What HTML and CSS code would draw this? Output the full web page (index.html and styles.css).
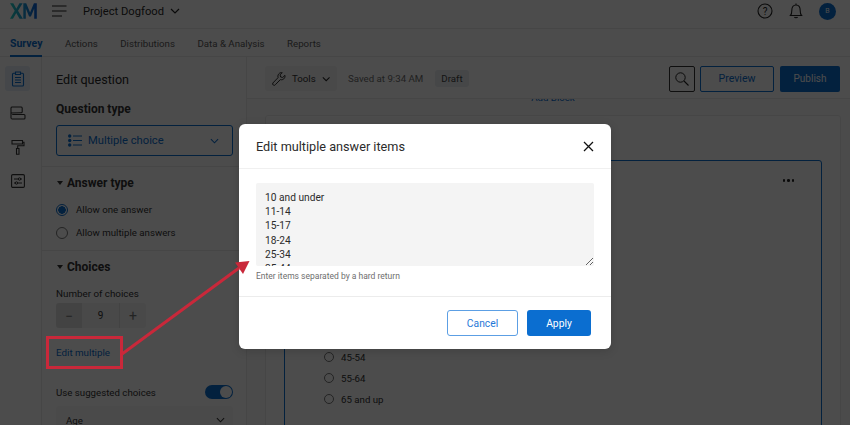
FILE: index.html
```html
<!DOCTYPE html>
<html lang="en">
<head>
<meta charset="utf-8">
<title>Edit multiple answer items</title>
<link rel="stylesheet" href="styles.css">
</head>
<body>
<div class="app">
  <header class="topbar">
    <svg class="logo" width="27" height="18" viewBox="0 0 28 18">
      <defs><linearGradient id="xm" x1="0" y1="0" x2="1" y2="0"><stop offset="0" stop-color="#21d0c3"/><stop offset=".5" stop-color="#1c9ad6"/><stop offset="1" stop-color="#0b5fd8"/></linearGradient></defs>
      <path fill="url(#xm)" d="M0 1h3.4L6.6 6.6 9.800 1h3.300L8.300 8.800 13.400 17h-3.500L6.500 11.200 3.100 17H0l4.900-8.200zM13.800 1h3l4 9.500 4-9.500h3v16h-2.700V6.500l-3.400 8.300h-1.900l-3.400-8.300V17h-2.600z"/>
    </svg>
    <svg class="hamburger" width="15" height="12" viewBox="0 0 15 12"><path d="M0 1h14.500M0 6h14.500M0 11h10" stroke="#222" stroke-width="1.200" fill="none"/></svg>
    <span class="project">Project Dogfood</span>
    <svg class="chev" width="10" height="6" viewBox="0 0 10 6"><path d="M1 1l4 4 4-4" stroke="#222" stroke-width="1.200" fill="none"/></svg>
    <div class="top-icons">
      <svg width="16" height="16" viewBox="0 0 16 16"><circle cx="8" cy="8" r="7" fill="none" stroke="#222" stroke-width="1.100"/><text x="8" y="11.500" text-anchor="middle" class="qmark">?</text></svg>
      <svg width="14" height="16" viewBox="0 0 14 16"><path d="M1.500 12.500c1-1 1.300-2 1.300-5C2.800 4 4.500 2 7 2s4.200 2 4.200 5.500c0 3 .3 4 1.300 5zM5.500 14c.3 1 2.700 1 3 0M7 .6V2" fill="none" stroke="#222" stroke-width="1.100"/></svg>
      <span class="avatar">B</span>
    </div>
  </header>
  <nav class="tabs">
    <a class="tab active">Survey</a>
    <a class="tab">Actions</a>
    <a class="tab">Distributions</a>
    <a class="tab">Data &amp; Analysis</a>
    <a class="tab">Reports</a>
  </nav>
  <div class="workspace">
    <aside class="rail">
      <span class="rail-item active">
        <svg width="14" height="16" viewBox="0 0 14 16"><path d="M4.500 2.300H2.500a1 1 0 0 0-1 1V14a1 1 0 0 0 1 1h9a1 1 0 0 0 1-1V3.300a1 1 0 0 0-1-1h-2M4.500 1h5v2.500h-5zM4 6.500h6M4 9h6M4 11.500h6" fill="none" stroke="#0b6ed0" stroke-width="1.100"/></svg>
      </span>
      <span class="rail-item">
        <svg width="16" height="14" viewBox="0 0 16 14"><path d="M1 7V2a1.200 1.200 0 0 1 1.200-1H11a1.200 1.200 0 0 1 1.200 1v3.800a1 1 0 0 1-1 1zM2.200 8.500H14a1 1 0 0 1 1 1V12a1 1 0 0 1-1 1H2.200A1.200 1.200 0 0 1 1 12V7" fill="none" stroke="#333" stroke-width="1.100"/></svg>
      </span>
      <span class="rail-item">
        <svg width="14" height="16" viewBox="0 0 14 16"><path d="M1 1.500h10.500v3.500H1zM11.500 3.200h1.500v3.500H6.700v2.800M5.500 9.500h2.500v5.700H5.500z" fill="none" stroke="#333" stroke-width="1.100"/></svg>
      </span>
      <span class="rail-item">
        <svg width="14" height="14" viewBox="0 0 14 14"><rect x=".6" y=".6" width="12.800" height="12.800" rx="1.200" fill="none" stroke="#333" stroke-width="1.100"/><path d="M3 5h8M3 9h8" stroke="#333"/><circle cx="8.500" cy="5" r="1.200" fill="#fff" stroke="#333"/><circle cx="5.500" cy="9" r="1.200" fill="#fff" stroke="#333"/></svg>
      </span>
    </aside>
    <section class="panel">
      <div class="section first">
        <h2 class="panel-title">Edit question</h2>
        <h3 class="label-strong">Question type</h3>
        <div class="qtype">
          <svg width="14" height="13" viewBox="0 0 14 13"><circle cx="1.700" cy="2" r="1.700" fill="#0b6ed0"/><circle cx="1.700" cy="6.500" r="1.700" fill="#0b6ed0"/><circle cx="1.700" cy="11" r="1.700" fill="#0b6ed0"/><path d="M5 2h9M5 6.500h9M5 11h9" stroke="#0b6ed0"/></svg>
          <span class="qtype-text">Multiple choice</span>
          <svg class="push" width="9" height="6" viewBox="0 0 10 6"><path d="M1 1l4 4 4-4" stroke="#0b6ed0" stroke-width="1.200" fill="none"/></svg>
        </div>
      </div>
      <div class="section">
        <h3 class="label-strong caret">Answer type</h3>
        <label class="radio-row first-radio"><span class="radio on"></span>Allow one answer</label>
        <label class="radio-row"><span class="radio"></span>Allow multiple answers</label>
      </div>
      <div class="section last">
        <h3 class="label-strong caret">Choices</h3>
        <div class="small-label">Number of choices</div>
        <div class="stepper"><span class="step minus">&minus;</span><span class="step value">9</span><span class="step">+</span></div>
        <a class="edit-link">Edit multiple</a>
        <div class="suggest"><span>Use suggested choices</span><span class="toggle"></span></div>
        <div class="age"><span>Age</span><svg width="9" height="6" viewBox="0 0 10 6"><path d="M1 1l4 4 4-4" stroke="#333" stroke-width="1.200" fill="none"/></svg></div>
      </div>
    </section>
    <main class="main">
      <div class="toolbar">
        <span class="tools">
          <svg width="15" height="15" viewBox="0 0 15 15"><path d="M1 12.300l5.500-5.700c-.8-2.500.8-5.400 3.700-5.500l.8.100-2.300 2.400.6 2.300 2.200.5L14 4.100c.5 3-2.200 5.500-5 4.600l-5.400 5.500a1.600 1.600 0 0 1-2.600-1.900z" fill="none" stroke="#222" stroke-width="1"/></svg>
          Tools
          <svg width="9" height="6" viewBox="0 0 10 6"><path d="M1 1l4 4 4-4" stroke="#222" stroke-width="1.200" fill="none"/></svg>
        </span>
        <span class="saved">Saved at 9:34 AM</span>
        <span class="draft">Draft</span>
        <span class="search-btn"><svg width="14" height="14" viewBox="0 0 14 14"><circle cx="5.500" cy="5.500" r="4.700" fill="none" stroke="#222"/><path d="M9 9l4.500 4.500" stroke="#222" stroke-width="1.100"/></svg></span>
        <span class="btn-outline">Preview</span>
        <span class="btn-solid">Publish</span>
      </div>
      <div class="canvas">
        <div class="add-block">Add Block</div>
        <div class="block">
          <div class="question">
            <div class="dots"><i></i><i></i><i></i></div>
            <label class="opt"><span class="radio"></span>45-54</label>
            <label class="opt"><span class="radio"></span>55-64</label>
            <label class="opt"><span class="radio"></span>65 and up</label>
          </div>
        </div>
      </div>
    </main>
  </div>
</div>

<div class="scrim"></div>

<div class="modal" role="dialog">
  <div class="modal-head">
    <h1 class="modal-title">Edit multiple answer items</h1>
    <svg width="11" height="11" viewBox="0 0 11 11"><path d="M1 1l9 9M10 1l-9 9" stroke="#111" stroke-width="1.300"/></svg>
  </div>
  <div class="modal-body">
    <textarea class="items" readonly>10 and under
11-14
15-17
18-24
25-34
35-44
45-54
55-64
65 and up</textarea>
    <p class="hint">Enter items separated by a hard return</p>
  </div>
  <div class="modal-foot">
    <span class="m-cancel">Cancel</span>
    <span class="m-apply">Apply</span>
  </div>
</div>

<svg class="annotation" width="850" height="425" viewBox="0 0 850 425">
  <rect x="47.500" y="337.500" width="74" height="30" fill="none" stroke="#c9283a" stroke-width="3"/>
  <path d="M122 354L239 268" stroke="#c9283a" stroke-width="3" fill="none"/>
  <path d="M249.500 261L235 262.500L243 274z" fill="#c9283a"/>
</svg>
</body>
</html>
```
FILE: styles.css
```css
* { box-sizing: border-box; }
html, body { margin: 0; height: 425px; overflow: hidden; }
body { font-family: Roboto, "Liberation Sans", sans-serif; color: #2b2b2b; background: #fff; font-size: 9.700px; }
h1, h2, h3, p { margin: 0; font-weight: 400; }

.app { width: 850px; height: 425px; display: flex; flex-direction: column; overflow: hidden; background: #fff; }

.topbar { height: 29px; flex: none; display: flex; align-items: center; padding: 0 14px 6px 10px; border-bottom: 1px solid #ececec; }
.logo { margin-right: 15px; }
.hamburger { margin-right: 16px; }
.project { font-size: 11.200px; margin-right: 6px; }
.top-icons { margin-left: auto; display: flex; align-items: center; gap: 16px; }
.qmark { font: 10px Roboto, sans-serif; fill: #222; }
.avatar { width: 17px; height: 17px; border-radius: 50%; background: #0b6ed0; color: #fff; font-size: 7px; display: flex; align-items: center; justify-content: center; }

.tabs { height: 28px; flex: none; display: flex; gap: 22.500px; padding: 0 0 0 10px; border-bottom: 1px solid #ececec; }
.tab { font-size: 9.700px; line-height: 29px; color: #5a5a5a; }
.tab.active { font-size: 10.500px; color: #0b6ed0; font-weight: 700; border-bottom: 2px solid #0b6ed0; height: 28px; }

.workspace { flex: 1; display: flex; min-height: 0; }
.rail { width: 42px; flex: none; border-right: 1px solid #ececec; display: flex; flex-direction: column; align-items: flex-start; padding: 9px 0 0 5px; gap: 9px; }
.rail-item { width: 25px; height: 25px; border-radius: 3px; display: flex; align-items: center; justify-content: center; }
.rail-item.active { background: #e6eff9; }

.panel { width: 205px; flex: none; border-right: 1px solid #ececec; }
.section { padding: 0 14px 0 14px; border-bottom: 1px solid #ececec; }
.section.first { height: 110px; padding-top: 15px; }
.section:nth-child(2) { height: 84px; padding-top: 9px; }
.section.last { border-bottom: 0; padding-top: 9px; }
.panel-title { font-size: 12.600px; line-height: 15px; }
.label-strong { font-size: 12px; font-weight: 700; line-height: 14px; color: #333; }
.section.first .label-strong { margin-top: 15px; }
.caret { padding-left: 11px; position: relative; }
.caret::before { content: ""; position: absolute; left: 1px; top: 5px; border: 3.500px solid transparent; border-top: 4px solid #333; border-bottom: 0; }
.qtype { margin-top: 9px; width: 177px; height: 31px; border: 1px solid #0b6ed0; border-radius: 3px; display: flex; align-items: center; padding: 0 13px 0 11px; color: #0b6ed0; gap: 6px; }
.qtype-text { font-size: 11.200px; }
.push { margin-left: auto; }
.radio-row { display: flex; align-items: center; gap: 8px; font-size: 9.700px; height: 23px; color: #333; }
.first-radio { margin-top: 8px; }
.radio { width: 12px; height: 12px; border-radius: 50%; border: 1px solid #777; flex: none; background: #fff; }
.radio.on { border-color: #0b6ed0; background: radial-gradient(circle, #0b6ed0 0 3.500px, #fff 4px); }
.small-label { font-size: 9.800px; line-height: 13px; margin-top: 13px; color: #333; }
.stepper { margin-top: 3px; display: flex; width: 90px; height: 25px; border-radius: 3px; background: #f3f3f3; color: #777; overflow: hidden; }
.step { width: 26px; display: flex; align-items: center; justify-content: center; font-size: 14px; }
.step.minus { background: #e2e2e2; }
.step.value { width: 38px; font-size: 10px; color: #333; border-right: 1px solid #e2e2e2; }
.edit-link { display: block; color: #0b6ed0; font-size: 9.800px; line-height: 13px; margin-top: 18px; }
.suggest { display: flex; align-items: center; justify-content: space-between; margin-top: 26px; width: 177px; height: 14px; font-size: 9.700px; color: #333; }
.toggle { width: 28px; height: 14px; border-radius: 7px; background: #0b6ed0; position: relative; }
.toggle::after { content: ""; position: absolute; right: 1px; top: 1px; width: 12px; height: 12px; border-radius: 50%; background: #fff; }
.age { margin-top: 7px; width: 177px; height: 28px; background: #f7f7f7; border-radius: 3px; display: flex; justify-content: space-between; align-items: center; padding: 0 8px 0 10px; font-size: 9.700px; color: #333; }

.main { flex: 1; min-width: 0; display: flex; flex-direction: column; }
.toolbar { height: 42px; flex: none; display: flex; align-items: center; padding: 2px 10px 0 18px; border-bottom: 1px solid #ececec; }
.tools { display: flex; align-items: center; gap: 6px; width: 72px; height: 25px; padding: 0 7px 0 7px; background: #f4f4f4; border-radius: 3px; font-size: 9.700px; color: #333; margin-right: 11px; }
.saved { font-size: 9.700px; color: #6e6e6e; margin-right: 12px; }
.draft { font-size: 9.700px; background: #eaeef2; color: #444; padding: 3px 6px; border-radius: 3px; }
.search-btn { margin-left: auto; width: 26px; height: 26px; border: 1px solid #333; border-radius: 2px; display: flex; align-items: center; justify-content: center; margin-right: 5px; }
.btn-outline { width: 74px; height: 26px; border: 1px solid #0b6ed0; border-radius: 2px; color: #0b6ed0; font-size: 10.600px; display: flex; align-items: center; justify-content: center; margin-right: 6px; }
.btn-solid { width: 60px; height: 26px; background: #0b6ed0; border-radius: 2px; color: #fff; font-size: 10px; display: flex; align-items: center; justify-content: center; }

.canvas { flex: 1; overflow: hidden; background: #fafafa; padding: 0 9px 0 18px; min-height: 0; }
.add-block { text-align: center; color: #0b6ed0; font-size: 9.700px; line-height: 12px; margin-top: -7px; }
.block { margin-top: 11px; height: 340px; border: 1px solid #ececec; border-radius: 3px; background: #fff; padding: 44px 18px 0 18px; }
.question { height: 300px; border: 1px solid #0b6ed0; border-radius: 3px; background: #fff; padding: 18px 27px 0 39px; }
.dots { display: flex; justify-content: flex-end; gap: 2px; margin-bottom: 165px; }
.dots i { width: 2.500px; height: 2.500px; border-radius: 50%; background: #222; }
.opt { display: flex; align-items: center; gap: 7px; height: 21px; font-size: 9.700px; color: #333; }
.opt .radio { width: 10px; height: 10px; }

.scrim { position: absolute; inset: 0; background: rgba(0, 0, 0, .7); }

.modal { position: absolute; left: 239px; top: 124px; width: 372px; height: 225px; background: #fff; border-radius: 6px; display: flex; flex-direction: column; box-shadow: 0 2px 10px rgba(0, 0, 0, .15); }
.modal-head { height: 45px; flex: none; display: flex; align-items: center; justify-content: space-between; padding: 0 17px; border-bottom: 1px solid #f0f0f0; }
.modal-title { font-size: 12.700px; color: #2b2b2b; }
.modal-body { height: 128px; flex: none; padding: 14px 17px 0; border-bottom: 1px solid #ececec; }
.items { display: block; width: 338px; height: 83px; border: 0; outline: 0; background: #f4f4f4; border-radius: 2px; padding: 8px 9px; font: 10.200px/14.200px Roboto, sans-serif; color: #2b2b2b; overflow: hidden; resize: vertical; }
.hint { margin-top: 5px; font-size: 8.500px; line-height: 11px; color: #6e6e6e; }
.modal-foot { flex: 1; display: flex; align-items: flex-start; justify-content: flex-end; gap: 9px; padding: 13px 20px 0 0; font-size: 10.300px; }
.m-cancel { width: 71px; height: 26px; border: 1px solid #5c9fe4; border-radius: 3px; color: #1f78d8; display: flex; align-items: center; justify-content: center; }
.m-apply { width: 64px; height: 26px; background: #0b6ed0; border-radius: 3px; color: #fff; display: flex; align-items: center; justify-content: center; }

.annotation { position: absolute; left: 0; top: 0; pointer-events: none; }
```
